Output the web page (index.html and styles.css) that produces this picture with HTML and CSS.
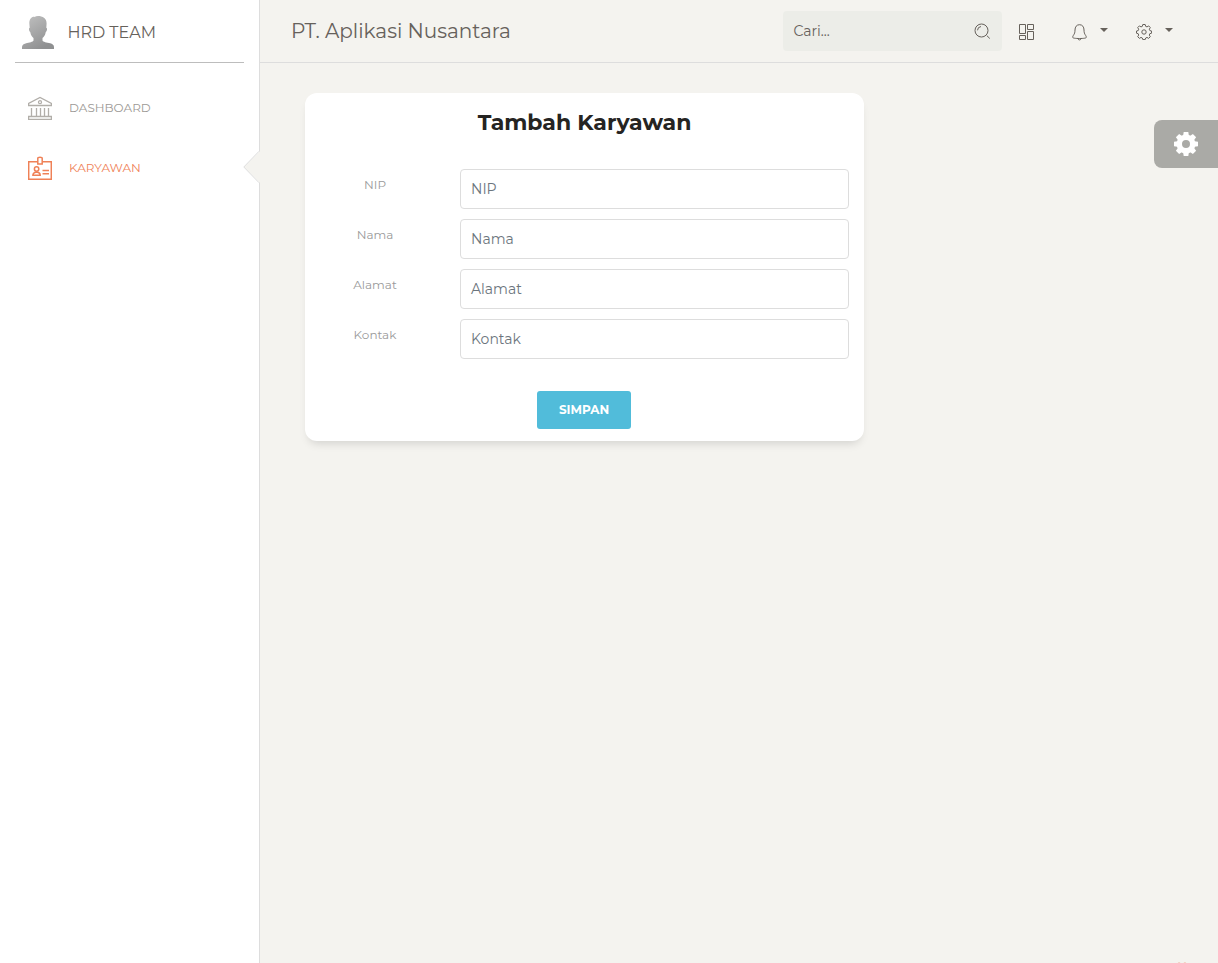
FILE: index.html
```html
<!DOCTYPE html>
<html lang="id">
<head>
<meta charset="utf-8">
<title>Tambah Karyawan</title>
<link rel="stylesheet" href="styles.css">
</head>
<body>
<div class="wrapper">
  <aside class="sidebar">
    <div class="logo">
      <svg class="avatar" width="34" height="34" viewBox="0 0 34 34">
        <defs><linearGradient id="skin" x1="0" y1="0" x2="0.6" y2="1"><stop offset="0" stop-color="#c2c2c2"/><stop offset="1" stop-color="#8f9091"/></linearGradient></defs>
        <path fill="url(#skin)" d="M17 0c4.500 0 8.600 2 8.600 7.500l-.3 4.200c1.200.2 1 2.800-.6 4.600-.5 2.800-1.700 4.400-3.200 5.700v2.200c0 1.500 2.500 1.900 6.500 2.700 3.400.7 5 1.900 5 4V33H1V31c0-2.200 1.600-3.400 5-4.100 4-.8 6.500-1.200 6.500-2.700V22c-1.500-1.300-2.700-2.900-3.200-5.700-1.600-1.800-1.800-4.400-.6-4.600L8.300 7C8.300 2.500 11.500.6 13.500.9 14.500.2 15.700 0 17 0z"/>
      </svg>
      <span class="brand">HRD TEAM</span>
    </div>
    <nav class="menu">
      <a class="item">
        <svg width="24" height="24" viewBox="0 0 24 24" fill="none" stroke="currentColor" stroke-width="1.300">
          <path d="M.6 9.500V7.400L12 1.500l11.400 5.900v2.100zM3.500 12V20M8.500 12V20M12.500 12V20M16.500 12V20M20.500 12V20M.6 20.500h22.800v2.900H.6z"/><circle cx="12" cy="6.200" r="1.500"/>
        </svg>
        <span>DASHBOARD</span>
      </a>
      <a class="item active">
        <svg width="24" height="24" viewBox="0 0 24 24" fill="none" stroke="currentColor" stroke-width="1.500">
          <path d="M9.800 5.700H.7v17.600h22.600V5.700h-9.100M9.800 2.200Q9.800 1.200 12 1.200t2.200 1V8H9.800zM14.500 14.500h6.500M14.500 17.800h6.500M4.900 19.200c0-2 1-2.400 2.700-2.900h2c1.800.5 2.600.9 2.600 2.900z"/><circle cx="8.600" cy="13" r="2.200"/>
        </svg>
        <span>KARYAWAN</span>
        <svg class="notch" width="17" height="34" viewBox="0 0 17 34"><path d="M17 1L1 17l16 16z" fill="#f4f3ef"/><path d="M16 1.300L.8 17 16 32.700" fill="none" stroke="#ddd"/></svg>
      </a>
    </nav>
  </aside>
  <main class="main">
    <header class="navbar">
      <span class="title">PT. Aplikasi Nusantara</span>
      <div class="search"><span>Cari...</span>
        <svg width="17" height="17" viewBox="0 0 17 17" fill="none" stroke="#66615b"><circle cx="7.500" cy="7.500" r="6.500"/><path d="M3.500 7.300A4 4 0 0 1 7 3.500M12.800 12.600l3 2.900"/></svg>
      </div>
      <svg class="grid-icon" width="16" height="16" viewBox="0 0 16 16" fill="none" stroke="#66615b"><path d="M.5.500h6v9h-6zM8.500.500h6v5h-6zM.5 11.500h6v4h-6zM8.500 7.500h6v8h-6z"/></svg>
      <svg class="bell-icon" width="16" height="17" viewBox="0 0 16 17" fill="none" stroke="#66615b"><path d="M7.500.7C4.500.7 3 3 3 6c0 5-2.300 5-2.300 7.300 0 .9 2.800 1.200 6.800 1.200s6.800-.3 6.800-1.200C14.300 11 12 11 12 6c0-3-1.500-5.300-4.500-5.300zM6 14.800c.4 1.500 2.600 1.500 3 0"/></svg>
      <i class="caret caret-a"></i>
      <svg class="gear-icon" width="16" height="16" viewBox="0 0 16 16" fill="none" stroke="#66615b"><path d="M6.800.5h2.400l.5 1.900 1.300.5 1.700-1 1.600 1.700-1 1.600.6 1.400 1.700.4v2.200l-1.800.5-.5 1.400 1 1.600-1.700 1.700-1.600-1-1.300.6-.5 1.600H6.800l-.5-1.600-1.300-.6-1.600 1-1.700-1.700 1-1.600-.5-1.400L.5 9.200V7l1.700-.4.5-1.400-1-1.600 1.700-1.700 1.600 1 1.300-.5z"/><circle cx="8" cy="8" r="2.200"/></svg>
      <i class="caret caret-b"></i>
    </header>
    <section class="content">
      <form class="card">
        <h1 class="heading">Tambah Karyawan</h1>
        <div class="row"><label>NIP</label><div class="field">NIP</div></div>
        <div class="row"><label>Nama</label><div class="field">Nama</div></div>
        <div class="row"><label>Alamat</label><div class="field">Alamat</div></div>
        <div class="row"><label>Kontak</label><div class="field">Kontak</div></div>
        <button class="save" type="button">SIMPAN</button>
      </form>
    </section>
    <footer class="footer"><svg width="12" height="11" viewBox="0 0 12 11"><path fill="#ef8157" d="M6 10.500L1 5.800C-1 3 1.500 0 4 .7L6 2 8 .7C10.500 0 13 3 11 5.800z"/></svg></footer>
  </main>
  <div class="settings">
    <svg width="24" height="24" viewBox="-12 -12 24 24"><g fill="#fff"><path id="tooth" d="M-2.300-12h4.600l.8 5h-6.200z"/><use href="#tooth" transform="rotate(45)"/><use href="#tooth" transform="rotate(90)"/><use href="#tooth" transform="rotate(135)"/><use href="#tooth" transform="rotate(180)"/><use href="#tooth" transform="rotate(225)"/><use href="#tooth" transform="rotate(270)"/><use href="#tooth" transform="rotate(315)"/></g><circle r="6.700" fill="none" stroke="#fff" stroke-width="5.400"/></svg>
  </div>
</div>
</body>
</html>
```
FILE: styles.css
```css
* { box-sizing: border-box; }
body { margin: 0; font-family: Montserrat, Inter, sans-serif; font-size: 14px; color: #66615b; background: #f4f3ef; }
span { white-space: nowrap; }
.wrapper { display: flex; height: 963px; position: relative; overflow: hidden; }
.sidebar { width: 260px; background: #fff; border-right: 1px solid #ddd; }
.logo { height: 63px; margin: 0 15px; padding: 16px 0 0 6px; border-bottom: 1px solid #bdbdbd; display: flex; align-items: flex-start; }
.brand { margin-left: 12.400px; font-size: 16px; line-height: 33px; }
.menu { padding-top: 15px; }
.item { height: 60px; display: flex; align-items: center; padding-left: 28px; font-size: 12px; color: #9c9995; position: relative; }
.item svg { color: #b1aea9; }
.item > span { margin-left: 17px; line-height: 14px; margin-top: -1px; }
.item.active, .item.active svg { color: #ef8157; }
.item .notch { position: absolute; right: -1px; top: 12px; }
.main { flex: 1; display: flex; flex-direction: column; }
.navbar { height: 63px; border-bottom: 1px solid #ddd; display: flex; padding-left: 31px; align-items: flex-start; }
.title { width: 492px; font-size: 20px; line-height: 62px; }
.search { width: 219px; height: 40px; margin-top: 11px; padding: 0 11px 0 10.500px; border-radius: 4px; background: #ecede8; display: flex; align-items: center; justify-content: space-between; font-size: 14px; }
.grid-icon { margin: 24px 0 0 17px; }
.bell-icon { margin: 24px 0 0 37px; }
.gear-icon { margin: 24px 0 0 28px; }
.caret { border: 4px solid transparent; border-top-color: #66615b; border-bottom: 0; margin-top: 28px; }
.caret-a { margin-left: 12px; }
.caret-b { margin-left: 13px; }
.content { padding: 30px 45px; flex: 1; }
.card { width: 559px; height: 348px; padding: 0 15px; border-radius: 12px; background: #fff; box-shadow: 0 6px 10px -4px rgba(0,0,0,.15); display: flex; flex-direction: column; }
.heading { margin: 0; height: 76px; text-align: center; font-size: 22px; font-weight: 700; line-height: 59px; color: #252422; }
.row { display: flex; margin-bottom: 10px; }
.row label { width: 110px; margin-right: 30px; text-align: center; font-size: 12px; line-height: 32px; color: #9a9a9a; }
.field { width: 389px; height: 40px; border: 1px solid #ddd; border-radius: 4px; padding-left: 10px; line-height: 38px; font-size: 14px; color: #6c757d; }
.save { align-self: center; width: 94px; height: 38px; margin: 22px 1px 0 0; padding: 0; border: 0; border-radius: 3px; background: #51bcda; color: #fff; font: 700 12px/38px Montserrat, Inter, sans-serif; }
.footer { height: 1px; padding-left: 916px; display: flex; opacity: .6; }
.footer svg { flex: none; }
.settings { position: absolute; right: 0; top: 120px; width: 64px; height: 48px; border-radius: 8px 0 0 8px; background: #aaaaa6; padding: 12px 20px; }
```
